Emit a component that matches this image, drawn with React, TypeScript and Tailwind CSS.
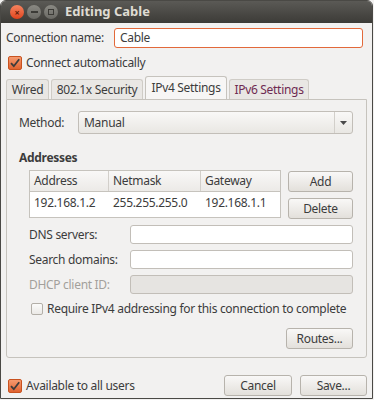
import type { ReactNode } from "react";

const font = { fontFamily: '"Noto Sans", "DejaVu Sans", sans-serif' };

function Check({ checked }: { checked?: boolean }) {
  if (checked) {
    return (
      <span className="flex h-[14px] w-[14px] shrink-0 items-center justify-center rounded-[2px] border border-[#c8521f] bg-gradient-to-b from-[#f59a6e] to-[#e0622f]">
        <svg width="12" height="12" viewBox="0 0 12 12">
          <path d="M2 6.2 L4.8 9.2 L10.2 2.2" fill="none" stroke="#3c3c3c" strokeWidth="1.8" />
        </svg>
      </span>
    );
  }
  return (
    <span className="h-[12px] w-[12px] shrink-0 rounded-[2px] border border-[#b3afa8] bg-gradient-to-b from-[#fbfbfa] to-[#ebe9e6]" />
  );
}

function Button({ children, className = "" }: { children: ReactNode; className?: string }) {
  return (
    <div
      className={`flex h-[21px] items-center justify-center rounded-[3px] border border-[#b7b3ac] bg-gradient-to-b from-[#f9f8f7] to-[#e3e0db] text-[12px] text-[#3c3c3c] ${className}`}
    >
      {children}
    </div>
  );
}

function Field({ disabled }: { disabled?: boolean }) {
  return (
    <div
      className={`h-[19px] flex-1 rounded-[3px] border border-[#c2beb8] ${
        disabled ? "bg-[#e6e4e1]" : "bg-white"
      }`}
    />
  );
}

function Tab({ label, w, active, hover }: { label: string; w: string; active?: boolean; hover?: boolean }) {
  return (
    <div
      className={`flex items-center justify-center whitespace-nowrap rounded-t-[3px] border border-b-0 ${w} ${
        active
          ? "h-[23px] border-[#c6c3bd] bg-[#f7f6f5] text-[#3c3c3c]"
          : "h-[20px] border-[#cfccc6] bg-[#e9e7e4] " + (hover ? "text-[#6e2a52]" : "text-[#3c3c3c]")
      }`}
    >
      {label}
    </div>
  );
}

export default function App() {
  return (
    <div className="h-[400px] w-[374px] bg-[#f2f1f0] text-[12px] tracking-[-0.3px] text-[#3c3c3c]" style={font}>
      <div className="flex h-[399px] w-[373px] flex-col overflow-hidden rounded-t-[6px] border border-[#4a4945] bg-[#f2f1f0]">
        {/* title bar */}
        <div className="flex h-[22px] shrink-0 items-center bg-gradient-to-b from-[#5b5a56] to-[#3c3b37] px-[9px]">
          <div className="flex items-center gap-[3px]">
            <span className="flex h-[14px] w-[14px] items-center justify-center rounded-full bg-gradient-to-b from-[#f5835e] to-[#e0421a] text-[9px] font-bold leading-none text-[#5a1b08]">
              ×
            </span>
            <span className="flex h-[14px] w-[14px] items-center justify-center rounded-full bg-gradient-to-b from-[#8a8983] to-[#6a6964]">
              <span className="h-[2px] w-[7px] bg-[#3c3b37]" />
            </span>
            <span className="flex h-[14px] w-[14px] items-center justify-center rounded-full bg-gradient-to-b from-[#8a8983] to-[#6a6964]">
              <span className="h-[6px] w-[6px] border border-[#3c3b37]" />
            </span>
          </div>
          <span className="ml-[7px] text-[13px] font-bold tracking-normal text-[#dfdbd2]">Editing Cable</span>
        </div>

        <div className="flex flex-1 flex-col px-[5px]">
          {/* connection name */}
          <div className="mt-[5px] flex h-[20px] items-center">
            <span className="w-[108px] whitespace-nowrap">Connection name:</span>
            <div className="mr-[4px] flex h-[20px] flex-1 items-center rounded-[3px] border border-[#e2693a] bg-white pl-[5px]">
              Cable
            </div>
          </div>

          <div className="mt-[7px] flex h-[16px] items-center gap-[4px] pl-[2px]">
            <Check checked />
            <span>Connect automatically</span>
          </div>

          {/* tabs */}
          <div className="mt-[5px] flex items-end gap-[2px]">
            <Tab label="Wired" w="w-[43px]" />
            <Tab label="802.1x Security" w="w-[92px]" />
            <Tab label="IPv4 Settings" w="w-[82px]" active />
            <Tab label="IPv6 Settings" w="w-[80px]" hover />
          </div>

          <div className="flex h-[259px] flex-col rounded-b-[3px] border border-[#c6c3bd] bg-[#f2f1f0] pl-[12px] pr-[13px]">
            <div className="mt-[11px] flex h-[23px] items-center">
              <span className="w-[59px]">Method:</span>
              <div className="flex h-[23px] flex-1 items-center rounded-[3px] border border-[#c2beb8] bg-gradient-to-b from-[#f9f8f7] to-[#e9e7e3]">
                <span className="flex-1 pl-[5px]">Manual</span>
                <span className="h-[21px] w-px bg-[#d2cfca]" />
                <span className="flex w-[17px] justify-center">
                  <svg width="7" height="4" viewBox="0 0 7 4">
                    <path d="M0 0 H7 L3.5 4 Z" fill="#4a4a4a" />
                  </svg>
                </span>
              </div>
            </div>

            <div className="mt-[15px] font-bold">Addresses</div>

            <div className="mt-[3px] flex gap-[7px] pl-[10px]">
              <div className="h-[48px] w-[252px] border border-[#c6c3bd] bg-white">
                <div className="flex h-[21px] border-b border-[#c6c3bd] bg-gradient-to-b from-[#f9f8f7] to-[#eceae7]">
                  <span className="flex w-[79px] items-center border-r border-[#d2cfca] pl-[4px]">Address</span>
                  <span className="flex w-[92px] items-center border-r border-[#d2cfca] pl-[4px]">Netmask</span>
                  <span className="flex flex-1 items-center pl-[4px]">Gateway</span>
                </div>
                <div className="flex h-[21px] items-center">
                  <span className="w-[79px] pl-[4px]">192.168.1.2</span>
                  <span className="w-[92px] pl-[4px]">255.255.255.0</span>
                  <span className="flex-1 pl-[4px]">192.168.1.1</span>
                </div>
              </div>
              <div className="flex flex-1 flex-col gap-[6px] pt-px">
                <Button>Add</Button>
                <Button>Delete</Button>
              </div>
            </div>

            <div className="mt-[6px] flex flex-col gap-[6px] pl-[10px]">
              <div className="flex h-[19px] items-center">
                <span className="w-[101px]">DNS servers:</span>
                <Field />
              </div>
              <div className="flex h-[19px] items-center">
                <span className="w-[101px]">Search domains:</span>
                <Field />
              </div>
              <div className="flex h-[19px] items-center">
                <span className="w-[101px] text-[#a3a09b]">DHCP client ID:</span>
                <Field disabled />
              </div>
            </div>

            <div className="mt-[7px] flex h-[16px] items-center gap-[4px] pl-[12px]">
              <Check />
              <span className="whitespace-nowrap">Require IPv4 addressing for this connection to complete</span>
            </div>

            <div className="mt-[11px] flex justify-end">
              <Button className="w-[67px]">Routes...</Button>
            </div>
          </div>

          <div className="mt-[17px] flex items-center">
            <div className="flex items-center gap-[4px] pl-[2px]">
              <Check checked />
              <span>Available to all users</span>
            </div>
            <div className="ml-auto flex gap-[8px]">
              <Button className="w-[68px]">Cancel</Button>
              <Button className="w-[67px]">Save...</Button>
            </div>
          </div>
        </div>
      </div>
    </div>
  );
}
